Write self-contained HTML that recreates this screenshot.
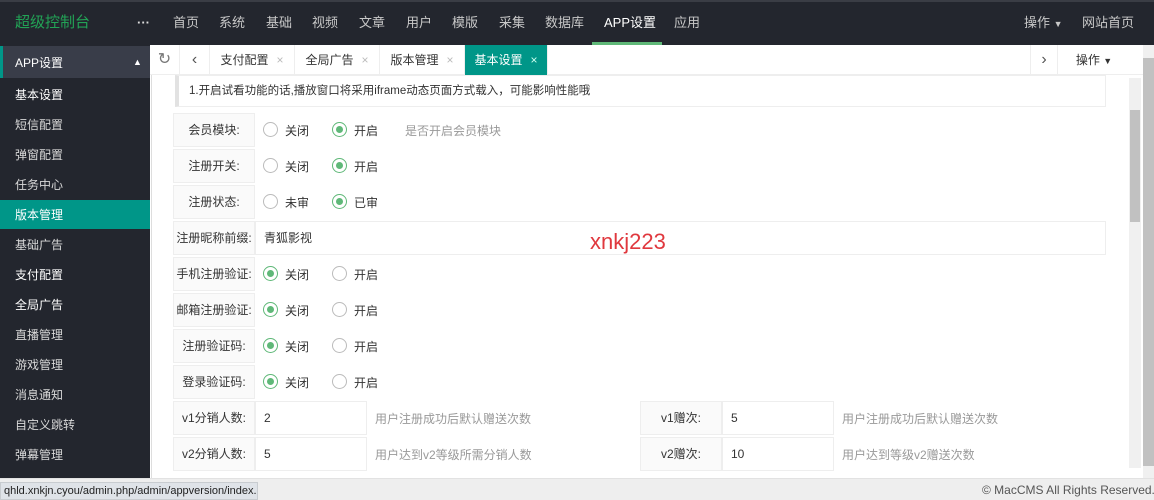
<!DOCTYPE html><html><head><meta charset="utf-8"><style>
*{margin:0;padding:0;box-sizing:border-box}
body{width:1154px;height:500px;overflow:hidden;position:relative;background:#fff;font-family:"Liberation Sans","Noto Sans CJK SC",sans-serif;font-size:12px;color:#333}
.a{position:absolute;white-space:nowrap}
#top{left:0;top:0;width:1154px;height:45px;background:#23262e;border-top:2px solid #3a3d45}
.nav{top:0;height:45px;line-height:45px;color:#c8c8c8;font-size:13px}
#side{left:0;top:45px;width:150px;height:438px;background:#23262e}
.si{left:15px;color:#d8d8d8;font-size:12px}
.lbl{left:173px;width:82px;height:34px;background:#fafafa;border:1px solid #eee;text-align:center;line-height:32px;font-size:12px}
.r{width:15px;height:15px;border:1px solid #bbb;border-radius:50%;background:#fff}
.r.on{border-color:#5fb878}
.r.on:after{content:"";position:absolute;left:3px;top:3px;width:7px;height:7px;border-radius:50%;background:#5fb878}
.t{font-size:12px;color:#333}
.inp{height:34px;border:1px solid #eee;background:#fff;line-height:32px;padding-left:8px;font-size:12px}
.help{color:#999;font-size:12px}
.tab{top:45px;height:30px;line-height:30px;font-size:12px;color:#333;border-right:1px solid #eee;text-align:center}
.tab i{font-style:normal;color:#bbb;margin-left:8px}
</style></head><body>
<div id="top" class="a"></div>
<div class="a nav" style="left:15px;color:#22a356;font-size:15px">超级控制台</div>
<div class="a nav" style="left:137px;color:#ddd;font-weight:bold">···</div>
<div class="a nav" style="left:173px">首页</div>
<div class="a nav" style="left:219px">系统</div>
<div class="a nav" style="left:266px">基础</div>
<div class="a nav" style="left:312px">视频</div>
<div class="a nav" style="left:359px">文章</div>
<div class="a nav" style="left:406px">用户</div>
<div class="a nav" style="left:452px">模版</div>
<div class="a nav" style="left:499px">采集</div>
<div class="a nav" style="left:545px">数据库</div>
<div class="a nav" style="left:604px;color:#fff">APP设置</div>
<div class="a" style="left:592px;top:42px;width:70px;height:3px;background:#5fb878"></div>
<div class="a nav" style="left:674px">应用</div>
<div class="a nav" style="left:1024px">操作 <span style="font-size:9px">▼</span></div>
<div class="a nav" style="left:1082px">网站首页</div>

<div id="side" class="a"></div>
<div class="a" style="left:0;top:46px;width:150px;height:32px;background:#393d49;border-left:3px solid #009688"></div>
<div class="a si" style="top:54px;color:#fff">APP设置</div>
<div class="a" style="left:133px;top:57px;color:#fff;font-size:9px">▲</div>
<div class="a" style="left:0;top:200px;width:150px;height:29px;background:#009688"></div>
<div class="a si" style="top:86px;color:#fff">基本设置</div>
<div class="a si" style="top:116px">短信配置</div>
<div class="a si" style="top:146px">弹窗配置</div>
<div class="a si" style="top:176px">任务中心</div>
<div class="a si" style="top:206px;color:#fff">版本管理</div>
<div class="a si" style="top:236px">基础广告</div>
<div class="a si" style="top:266px;color:#fff">支付配置</div>
<div class="a si" style="top:296px;color:#fff">全局广告</div>
<div class="a si" style="top:326px">直播管理</div>
<div class="a si" style="top:356px">游戏管理</div>
<div class="a si" style="top:386px">消息通知</div>
<div class="a si" style="top:416px">自定义跳转</div>
<div class="a si" style="top:446px">弹幕管理</div>

<div class="a" style="left:150px;top:45px;width:993px;height:30px;background:#fff;border-bottom:1px solid #eee"></div>
<div class="a tab" style="left:150px;width:30px;font-size:16px;color:#777">↻</div>
<div class="a tab" style="left:180px;width:30px;font-size:16px;color:#555">‹</div>
<div class="a tab" style="left:210px;width:85px">支付配置<i>×</i></div>
<div class="a tab" style="left:295px;width:85px">全局广告<i>×</i></div>
<div class="a tab" style="left:380px;width:85px">版本管理<i>×</i></div>
<div class="a tab" style="left:465px;width:83px;background:#009688;color:#fff">基本设置<i style="color:#cfe">×</i></div>
<div class="a tab" style="left:1030px;width:28px;border-left:1px solid #eee;font-size:16px;color:#555">›</div>
<div class="a tab" style="left:1058px;width:72px;border:none">操作 <span style="font-size:9px">▼</span></div>
<div class="a" style="left:1143px;top:45px;width:11px;height:433px;background:#f0f0f0"></div>
<div class="a" style="left:1143px;top:58px;width:11px;height:408px;background:#c1c1c1"></div>
<div class="a" style="left:1129px;top:78px;width:12px;height:390px;background:#f0f0f0"></div>
<div class="a" style="left:1130px;top:110px;width:10px;height:112px;background:#c1c1c1"></div>
<div class="a" style="left:151px;top:75px;width:1px;height:403px;background:#ddd"></div>

<div class="a" style="left:175px;top:75px;width:931px;height:32px;border:1px solid #eee;border-left:4px solid #e2e2e2;padding:6px 10px;font-size:11.5px;background:#fff">1.开启试看功能的话,播放窗口将采用iframe动态页面方式载入，可能影响性能哦</div>

<div class="a lbl" style="top:113px">会员模块:</div>
<div class="a r" style="left:263px;top:122px"></div><div class="a t" style="left:285px;top:122px">关闭</div>
<div class="a r on" style="left:332px;top:122px"></div><div class="a t" style="left:354px;top:122px">开启</div>
<div class="a help" style="left:405px;top:122px">是否开启会员模块</div>

<div class="a lbl" style="top:149px">注册开关:</div>
<div class="a r" style="left:263px;top:158px"></div><div class="a t" style="left:285px;top:158px">关闭</div>
<div class="a r on" style="left:332px;top:158px"></div><div class="a t" style="left:354px;top:158px">开启</div>

<div class="a lbl" style="top:185px">注册状态:</div>
<div class="a r" style="left:263px;top:194px"></div><div class="a t" style="left:285px;top:194px">未审</div>
<div class="a r on" style="left:332px;top:194px"></div><div class="a t" style="left:354px;top:194px">已审</div>

<div class="a lbl" style="top:221px">注册昵称前缀:</div>
<div class="a inp" style="left:255px;top:221px;width:851px">青狐影视</div>
<div class="a" style="left:590px;top:229px;color:#e0383e;font-size:22px">xnkj223</div>

<div class="a lbl" style="top:257px">手机注册验证:</div>
<div class="a r on" style="left:263px;top:266px"></div><div class="a t" style="left:285px;top:266px">关闭</div>
<div class="a r" style="left:332px;top:266px"></div><div class="a t" style="left:354px;top:266px">开启</div>

<div class="a lbl" style="top:293px">邮箱注册验证:</div>
<div class="a r on" style="left:263px;top:302px"></div><div class="a t" style="left:285px;top:302px">关闭</div>
<div class="a r" style="left:332px;top:302px"></div><div class="a t" style="left:354px;top:302px">开启</div>

<div class="a lbl" style="top:329px">注册验证码:</div>
<div class="a r on" style="left:263px;top:338px"></div><div class="a t" style="left:285px;top:338px">关闭</div>
<div class="a r" style="left:332px;top:338px"></div><div class="a t" style="left:354px;top:338px">开启</div>

<div class="a lbl" style="top:365px">登录验证码:</div>
<div class="a r on" style="left:263px;top:374px"></div><div class="a t" style="left:285px;top:374px">关闭</div>
<div class="a r" style="left:332px;top:374px"></div><div class="a t" style="left:354px;top:374px">开启</div>

<div class="a lbl" style="top:401px">v1分销人数:</div>
<div class="a inp" style="left:255px;top:401px;width:112px">2</div>
<div class="a help" style="left:375px;top:410px">用户注册成功后默认赠送次数</div>
<div class="a lbl" style="left:640px;top:401px">v1赠次:</div>
<div class="a inp" style="left:722px;top:401px;width:112px">5</div>
<div class="a help" style="left:842px;top:410px">用户注册成功后默认赠送次数</div>

<div class="a lbl" style="top:437px">v2分销人数:</div>
<div class="a inp" style="left:255px;top:437px;width:112px">5</div>
<div class="a help" style="left:375px;top:446px">用户达到v2等级所需分销人数</div>
<div class="a lbl" style="left:640px;top:437px">v2赠次:</div>
<div class="a inp" style="left:722px;top:437px;width:112px">10</div>
<div class="a help" style="left:842px;top:446px">用户达到等级v2赠送次数</div>

<div class="a" style="left:0;top:478px;width:1154px;height:22px;background:#eeeeee;border-top:1px solid #e2e2e2"></div>
<div class="a" style="left:0;top:482px;width:258px;height:18px;background:#dfe3e8;border:1px solid #c8ccd0;font-size:11px;line-height:16px;padding-left:3px;color:#222;overflow:hidden">qhld.xnkjn.cyou/admin.php/admin/appversion/index.html</div>
<div class="a" style="left:982px;top:483px;font-size:12px;color:#555">© MacCMS All Rights Reserved.</div>
</body></html>
